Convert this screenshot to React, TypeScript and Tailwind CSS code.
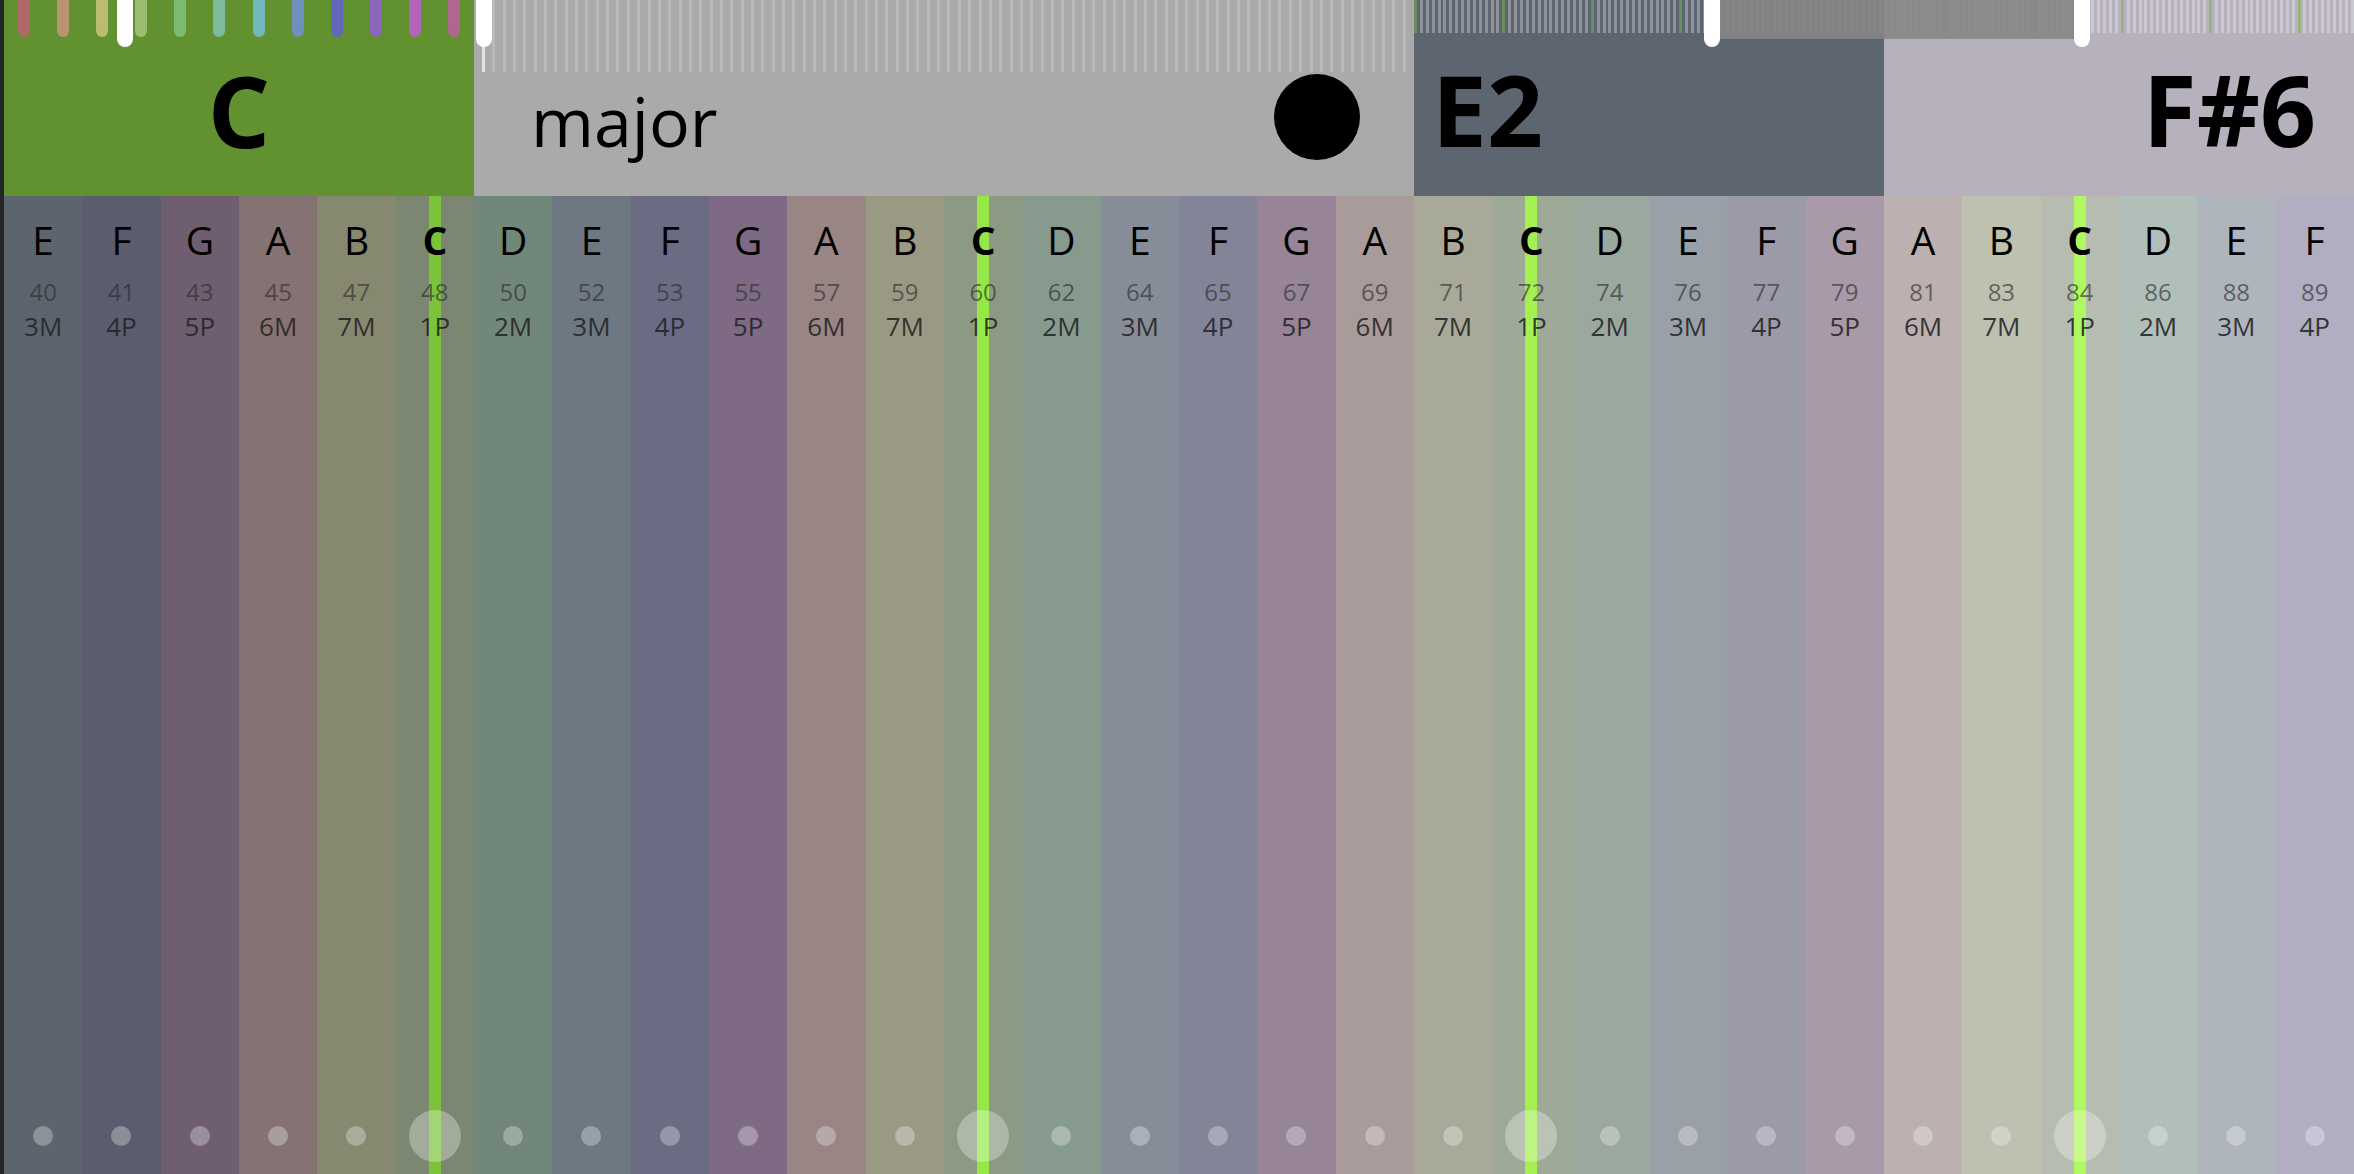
import React from 'react';

// root selector swatches, one per semitone
const rootSwatches = [
  'bg-[#b0686a]', 'bg-[#b89470]', 'bg-[#bcbc70]', 'bg-[#9cbc70]',
  'bg-[#7cbc70]', 'bg-[#7cbc9c]', 'bg-[#70b8bc]', 'bg-[#7090bc]',
  'bg-[#6466b8]', 'bg-[#8c66b8]', 'bg-[#b066b8]', 'bg-[#b0668e]',
];

type Key = { note: string; midi: number; interval: string; bg: string; line?: string };

const keys: Key[] = [
  { note: 'E', midi: 40, interval: '3M', bg: 'bg-[#5c646e]' },
  { note: 'F', midi: 41, interval: '4P', bg: 'bg-[#5b5c6e]' },
  { note: 'G', midi: 43, interval: '5P', bg: 'bg-[#6e5e70]' },
  { note: 'A', midi: 45, interval: '6M', bg: 'bg-[#857373]' },
  { note: 'B', midi: 47, interval: '7M', bg: 'bg-[#878870]' },
  { note: 'C', midi: 48, interval: '1P', bg: 'bg-[#7b8770]', line: 'bg-[#7cc23a]' },
  { note: 'D', midi: 50, interval: '2M', bg: 'bg-[#71877a]' },
  { note: 'E', midi: 52, interval: '3M', bg: 'bg-[#6e7882]' },
  { note: 'F', midi: 53, interval: '4P', bg: 'bg-[#6b6b84]' },
  { note: 'G', midi: 55, interval: '5P', bg: 'bg-[#7e6a84]' },
  { note: 'A', midi: 57, interval: '6M', bg: 'bg-[#988584]' },
  { note: 'B', midi: 59, interval: '7M', bg: 'bg-[#9a9a84]' },
  { note: 'C', midi: 60, interval: '1P', bg: 'bg-[#8c9a84]', line: 'bg-[#96e846]' },
  { note: 'D', midi: 62, interval: '2M', bg: 'bg-[#869a8e]' },
  { note: 'E', midi: 64, interval: '3M', bg: 'bg-[#878d98]' },
  { note: 'F', midi: 65, interval: '4P', bg: 'bg-[#838498]' },
  { note: 'G', midi: 67, interval: '5P', bg: 'bg-[#978498]' },
  { note: 'A', midi: 69, interval: '6M', bg: 'bg-[#a99b9a]' },
  { note: 'B', midi: 71, interval: '7M', bg: 'bg-[#a8a998]' },
  { note: 'C', midi: 72, interval: '1P', bg: 'bg-[#9ea998]', line: 'bg-[#a4f050]' },
  { note: 'D', midi: 74, interval: '2M', bg: 'bg-[#9aa89e]' },
  { note: 'E', midi: 76, interval: '3M', bg: 'bg-[#9aa0a8]' },
  { note: 'F', midi: 77, interval: '4P', bg: 'bg-[#9a9aa9]' },
  { note: 'G', midi: 79, interval: '5P', bg: 'bg-[#a89aa9]' },
  { note: 'A', midi: 81, interval: '6M', bg: 'bg-[#bcb0b0]' },
  { note: 'B', midi: 83, interval: '7M', bg: 'bg-[#bec0b0]' },
  { note: 'C', midi: 84, interval: '1P', bg: 'bg-[#b6bdb0]', line: 'bg-[#b0f860]' },
  { note: 'D', midi: 86, interval: '2M', bg: 'bg-[#b0bfb8]' },
  { note: 'E', midi: 88, interval: '3M', bg: 'bg-[#afb5bd]' },
  { note: 'F', midi: 89, interval: '4P', bg: 'bg-[#b0aec0]' },
];

function KeyColumn({ k }: { k: Key }) {
  const isRoot = !!k.line;
  return (
    <div className={`relative flex flex-1 flex-col items-center ${k.bg}`}>
      {k.line && <div className={`absolute inset-y-0 left-1/2 w-[12px] -translate-x-1/2 ${k.line}`} />}
      <span className={`relative mt-[24px] text-[39px] leading-[39px] text-black ${isRoot ? 'font-bold' : ''}`}>
        {k.note}
      </span>
      <span className="relative mt-[21px] text-[24px] leading-[24px] text-[#2c2c2c]/65">{k.midi}</span>
      <span className="relative mt-[9px] text-[26px] leading-[26px] text-[#242424]/90">{k.interval}</span>
      <div className="relative mt-auto mb-[12px] flex h-[52px] items-center justify-center">
        <div className={`rounded-full bg-white/30 ${isRoot ? 'size-[52px]' : 'size-[20px]'}`} />
      </div>
    </div>
  );
}

export default function App() {
  return (
    <div className="flex h-screen w-full overflow-hidden bg-[#262626] pl-[4px] font-['Open_Sans',sans-serif]">
      <div className="flex flex-1 flex-col">
        {/* header: root / scale / range */}
        <div className="grid h-[196px] shrink-0 grid-cols-5">
          <div className="relative flex flex-col bg-[#629130]">
            <div className="grid h-[37px] grid-cols-12">
              {rootSwatches.map((c) => (
                <div key={c} className="flex justify-center">
                  <div className={`h-full w-[12px] rounded-b-full ${c}`} />
                </div>
              ))}
            </div>
            <div className="absolute left-[113px] top-0 h-[47px] w-[16px] rounded-b-full bg-white" />
            <div className="flex flex-1 items-end justify-center pb-[37px]">
              <span className="text-[98px] font-bold leading-none text-black">C</span>
            </div>
          </div>

          <div className="relative col-span-2 flex flex-col bg-[#aaaaaa]">
            <div className="flex h-[72px] justify-between pl-[8px] pr-[8px]">
              {Array.from({ length: 90 }).map((_, i) => (
                <div key={i} className={`w-[3px] ${i === 0 ? 'bg-[#e4e4e4]' : 'bg-[#b9b9b9]'}`} />
              ))}
            </div>
            <div className="absolute left-[2px] top-0 h-[47px] w-[16px] rounded-b-full bg-white" />
            <div className="flex flex-1 items-end justify-between pb-[36px] pl-[57px] pr-[54px]">
              <span className="mb-[5px] text-[68px] leading-none text-black">major</span>
              <div className="size-[86px] rounded-full bg-black" />
            </div>
          </div>

          <div className="relative col-span-2 grid grid-cols-2">
            <div className="flex items-end bg-[#5d6570] pb-[38px] pl-[18px]">
              <span className="text-[98px] font-bold leading-none text-black">E2</span>
            </div>
            <div className="flex items-end justify-end bg-[#b7b1bd] pb-[38px] pr-[38px]">
              <span className="text-[98px] font-bold leading-none text-black">F#6</span>
            </div>

            {/* range strip */}
            <div className="absolute inset-x-0 top-0 flex h-[33px] justify-between">
              {Array.from({ length: 160 }).map((_, i) => (
                <div key={i} className={`w-[3px] ${i % 15 === 0 ? 'bg-[#7ab648]/50' : 'bg-white/30'}`} />
              ))}
            </div>
            <div className="absolute left-[305px] top-0 h-[39px] w-[355px] bg-[#858585]/90" />
            <div className="absolute left-[290px] top-0 h-[47px] w-[16px] rounded-b-full bg-white" />
            <div className="absolute left-[660px] top-0 h-[47px] w-[16px] rounded-b-full bg-white" />
          </div>
        </div>

        {/* keys */}
        <div className="flex flex-1">
          {keys.map((k) => (
            <KeyColumn key={k.midi} k={k} />
          ))}
        </div>
      </div>
    </div>
  );
}
